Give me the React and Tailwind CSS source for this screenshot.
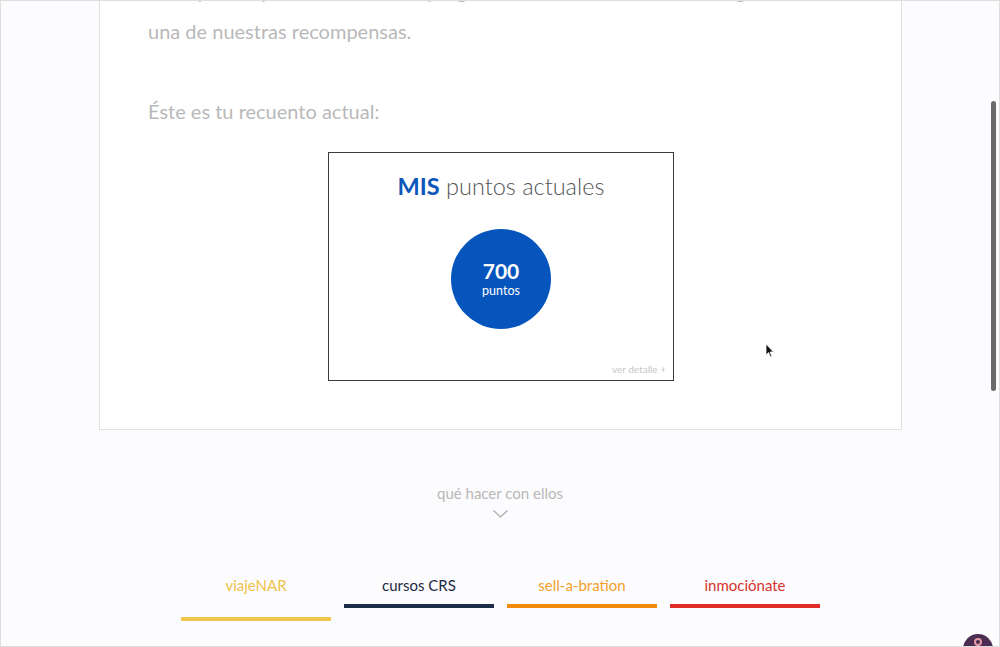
export default function App() {
  const tabs = [
    { label: "viajeNAR", text: "text-[#efc24a]", bar: "bg-[#f1c54e]", active: true },
    { label: "cursos CRS", text: "text-[#1c2a45]", bar: "bg-[#1b2b48]", active: false },
    { label: "sell-a-bration", text: "text-[#f2a12a]", bar: "bg-[#f38a0c]", active: false },
    { label: "inmociónate", text: "text-[#d8322c]", bar: "bg-[#df2c26]", active: false },
  ];
  return (
    <div className="relative h-[647px] w-[1000px] overflow-hidden border border-[#dedede] bg-[#fcfbfd] font-['Lato',sans-serif]">
      <div className="ml-[98px] w-[803px] border-x border-b border-[#e2e2e2] bg-white pl-[48px] pb-[48px]">
        <p className="mt-[-30px] text-[20px] leading-[40px] text-[#b9b9b9] whitespace-nowrap">
          Cada punto que acumules en el programa te acerca a disfrutar de alguna
        </p>
        <p className="text-[20px] leading-[40px] text-[#b9b9b9]">una de nuestras recompensas.</p>
        <p className="mt-[40px] text-[20px] leading-[40px] text-[#b9b9b9]">Éste es tu recuento actual:</p>
        <div className="ml-[180px] mt-[21px] flex h-[229px] w-[346px] flex-col items-center border border-[#3a3a3a] pt-[18px]">
          <h2 className="text-[23.5px] leading-[30px] text-[#555] font-light">
            <span className="font-bold text-[#0b56b9]">MIS</span> puntos actuales
          </h2>
          <div className="mt-[28px] flex h-[100px] w-[100px] flex-col items-center justify-center rounded-full bg-[#0655bd] pt-[1px] text-white">
            <div className="text-[21px] font-bold leading-[22px]">700</div>
            <div className="text-[12.5px] leading-[18px]">puntos</div>
          </div>
          <div className="mt-auto self-end pr-[7px] pb-[5px] text-[10px] leading-[12px] text-[#c8c8c8]">ver detalle +</div>
        </div>
      </div>
      <div className="mt-[54px] flex flex-col items-center">
        <div className="text-[15px] leading-[18px] text-[#b8b8b8]">qué hacer con ellos</div>
        <svg className="mt-[8px]" width="15" height="8" viewBox="0 0 15 8" fill="none">
          <path d="M0.5 0.5 L7.5 7 L14.5 0.5" stroke="#aaa" strokeWidth="1.2" />
        </svg>
      </div>
      <div className="mt-[57px] ml-[180px] flex gap-[13px]">
        {tabs.map((t) => (
          <div key={t.label} className="flex w-[150px] flex-col items-center">
            <div className={`text-[15px] leading-[20px] ${t.text}`}>{t.label}</div>
            <div className={`${t.active ? "mt-[22px]" : "mt-[9px]"} h-[4px] w-full ${t.bar}`} />
          </div>
        ))}
      </div>
      <div className="absolute right-[3px] top-[100px] h-[290px] w-[5px] rounded-full bg-[#6b6b6b]" />
      <div className="absolute left-[962px] top-[633px] flex h-[30px] w-[30px] justify-center rounded-full bg-[#4b2c52] pt-[4px]">
        <div className="h-[8px] w-[8px] rounded-full border-[2px] border-[#e59aa6]" />
      </div>
      <svg className="absolute left-[764px] top-[342px]" width="10" height="16" viewBox="0 0 10 16">
        <path d="M1 1 L1 12 L3.5 9.5 L5.5 14 L7 13.3 L5 9 L8.5 9 Z" fill="#111" stroke="#fff" strokeWidth="0.8" />
      </svg>
    </div>
  );
}
